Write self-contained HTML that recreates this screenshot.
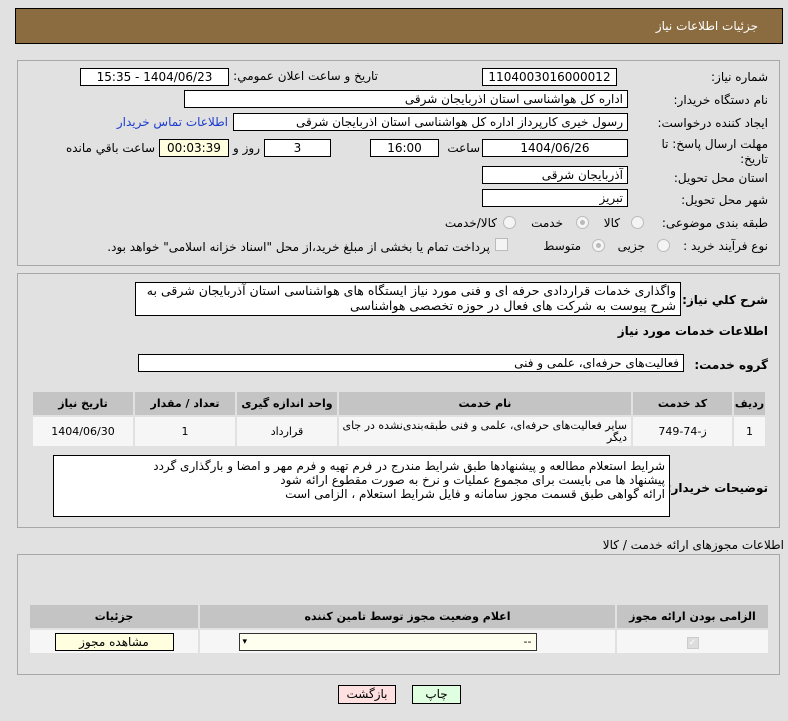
<!DOCTYPE html>
<html><head><meta charset="utf-8">
<style>
*{box-sizing:border-box;margin:0;padding:0}
body{width:788px;height:721px;background:#e1e1e1;font-family:"DejaVu Sans","Liberation Sans","Noto Sans CJK SC",sans-serif;font-size:11px;color:#000;position:relative;overflow:hidden;direction:rtl}
.a{position:absolute;white-space:nowrap}
.box{position:absolute;background:#fff;border:1px solid #000;padding:0 4px;line-height:16px;text-align:right;font-size:12px;white-space:nowrap;overflow:hidden}
.c{text-align:center}
.lbl{position:absolute;white-space:nowrap;text-align:right;font-size:12px}
.panel{position:absolute;border:1px solid #a8a8a8;background:#e1e1e1}
.radio{position:absolute;width:13px;height:13px;border-radius:50%;border:1px solid #bbb;background:#f4f4f4}
.radio.on::after{content:"";position:absolute;left:3px;top:3px;width:5px;height:5px;border-radius:50%;background:#bbb}
table{border-collapse:collapse;position:absolute}
td,th{border:2px solid #e1e1e1;text-align:center;font-size:11px}
th{background:#c4c4c4;font-weight:bold}
td{background:#f6f6f6}
.b{font-weight:bold}
</style></head><body>
<div class="a" style="left:15px;top:8px;width:768px;height:36px;background:#8b6b40;border:1px solid #000"></div>
<div class="lbl" style="right:30px;top:19px;color:#fff;font-size:12px">جزئیات اطلاعات نیاز</div>

<div class="panel" style="left:17px;top:60px;width:763px;height:206px"></div>
<div class="lbl" style="right:20px;top:70px">شماره نیاز:</div>
<div class="box c" style="left:482px;top:68px;width:135px;height:18px">1104003016000012</div>
<div class="lbl" style="right:410px;top:69px">تاریخ و ساعت اعلان عمومي:</div>
<div class="box c" style="left:80px;top:68px;width:149px;height:18px">1404/06/23 - 15:35</div>
<div class="lbl" style="right:20px;top:93px">نام دستگاه خریدار:</div>
<div class="box" style="left:184px;top:90px;width:444px;height:18px">اداره کل هواشناسی استان اذربایجان شرقی</div>
<div class="lbl" style="right:20px;top:116px">ایجاد کننده درخواست:</div>
<div class="box" style="left:233px;top:113px;width:395px;height:18px">رسول خیری کارپرداز اداره کل هواشناسی استان اذربایجان شرقی</div>
<div class="lbl" style="right:560px;top:115px;color:#1a3cd0">اطلاعات تماس خریدار</div>
<div class="lbl" style="right:20px;top:137px;line-height:15px">مهلت ارسال پاسخ: تا<br>تاریخ:</div>
<div class="box c" style="left:482px;top:139px;width:146px;height:18px">1404/06/26</div>
<div class="lbl" style="right:308px;top:141px">ساعت</div>
<div class="box c" style="left:370px;top:139px;width:69px;height:18px">16:00</div>
<div class="box c" style="left:264px;top:139px;width:67px;height:18px">3</div>
<div class="lbl" style="right:528px;top:141px">روز و</div>
<div class="box c" style="left:159px;top:139px;width:70px;height:18px;background:#ffffe0">00:03:39</div>
<div class="lbl" style="right:633px;top:141px">ساعت باقي مانده</div>
<div class="lbl" style="right:20px;top:171px">استان محل تحویل:</div>
<div class="box" style="left:482px;top:166px;width:146px;height:18px">آذربایجان شرقی</div>
<div class="lbl" style="right:20px;top:193px">شهر محل تحویل:</div>
<div class="box" style="left:482px;top:189px;width:146px;height:18px">تبریز</div>
<div class="lbl" style="right:20px;top:216px">طبقه بندی موضوعی:</div>
<div class="radio" style="left:631px;top:216px"></div><div class="lbl" style="right:168px;top:216px">کالا</div>
<div class="radio on" style="left:576px;top:216px"></div><div class="lbl" style="right:225px;top:216px">خدمت</div>
<div class="radio" style="left:503px;top:216px"></div><div class="lbl" style="right:291px;top:216px">کالا/خدمت</div>
<div class="lbl" style="right:20px;top:239px">نوع فرآیند خرید :</div>
<div class="radio" style="left:657px;top:239px"></div><div class="lbl" style="right:143px;top:239px">جزیی</div>
<div class="radio on" style="left:592px;top:239px"></div><div class="lbl" style="right:207px;top:239px">متوسط</div>
<div class="a" style="left:495px;top:238px;width:13px;height:13px;border:1px solid #bbb;background:#f4f4f4"></div>
<div class="lbl" style="right:298px;top:240px">پرداخت تمام یا بخشی از مبلغ خرید،از محل "اسناد خزانه اسلامی" خواهد بود.</div>

<div class="panel" style="left:17px;top:273px;width:763px;height:255px"></div>
<div class="lbl b" style="right:20px;top:293px;font-size:12px">شرح کلي نیاز:</div>
<div class="box" style="left:135px;top:282px;width:546px;height:34px;line-height:15px;white-space:normal;font-size:12.5px">واگذاری خدمات قراردادی حرفه ای و فنی مورد نیاز ایستگاه های هواشناسی استان آذربایجان شرقی به شرح پیوست به شرکت های فعال در حوزه تخصصی هواشناسی</div>
<div class="lbl b" style="right:20px;top:324px;font-size:12px">اطلاعات خدمات مورد نیاز</div>
<div class="lbl b" style="right:20px;top:358px;font-size:12px">گروه خدمت:</div>
<div class="box" style="left:138px;top:354px;width:546px;height:18px">فعالیت‌های حرفه‌ای، علمی و فنی</div>
<table style="left:31px;top:390px;width:736px;height:58px;border:1px solid #bbb">
<tr style="height:25px"><th style="width:33px">ردیف</th><th style="width:101px">کد خدمت</th><th>نام خدمت</th><th style="width:102px">واحد اندازه گیری</th><th style="width:102px">تعداد / مقدار</th><th style="width:102px">تاریخ نیاز</th></tr>
<tr><td>1</td><td>ز-74-749</td><td style="line-height:12px;text-align:right;padding-right:4px">سایر فعالیت‌های حرفه‌ای، علمی و فنی طبقه‌بندی‌نشده در جای دیگر</td><td>قرارداد</td><td>1</td><td>1404/06/30</td></tr>
</table>
<div class="lbl b" style="right:20px;top:481px;font-size:12px">توضیحات خریدار:</div>
<div class="box" style="left:53px;top:455px;width:617px;height:62px;line-height:14px;padding-top:3px">شرایط استعلام مطالعه و پیشنهادها طبق شرایط مندرج در فرم تهیه و فرم مهر و امضا و بارگذاری گردد<br>پیشنهاد ها می بایست برای مجموع عملیات و نرخ به صورت مقطوع ارائه شود<br>ارائه گواهی طبق قسمت مجوز سامانه و فایل شرایط استعلام ، الزامی است</div>

<div class="lbl" style="right:4px;top:538px">اطلاعات مجوزهای ارائه خدمت / کالا</div>
<div class="panel" style="left:17px;top:554px;width:763px;height:121px"></div>
<table style="left:28px;top:603px;width:742px;height:52px;border:1px solid #bbb">
<tr style="height:25px"><th style="width:153px">الزامی بودن ارائه مجوز</th><th>اعلام وضعیت مجوز توسط تامین کننده</th><th style="width:170px">جزئیات</th></tr>
<tr><td><span style="display:inline-block;width:12px;height:12px;background:#ddd;border:1px solid #ccc;color:#fff;font-size:9px;line-height:10px">✓</span></td>
<td><div style="margin-left:auto;margin-right:auto;position:relative;left:-20px;width:298px;height:18px;border:1px solid #333;background:#fffff0;text-align:right;padding:0 4px;line-height:16px">--<span style="position:absolute;left:3px;top:0;font-size:9px">▾</span></div></td>
<td><div style="margin:auto;width:119px;height:18px;border:1px solid #000;background:#ffffe0;line-height:16px;font-size:12px">مشاهده مجوز</div></td></tr>
</table>
<div class="a c" style="left:338px;top:685px;width:58px;height:19px;border:1px solid #000;background:#ffe0e0;line-height:17px;font-size:12px">بازگشت</div>
<div class="a c" style="left:412px;top:685px;width:49px;height:19px;border:1px solid #000;background:#e0ffe0;line-height:17px;font-size:12px">چاپ</div>
</body></html>
